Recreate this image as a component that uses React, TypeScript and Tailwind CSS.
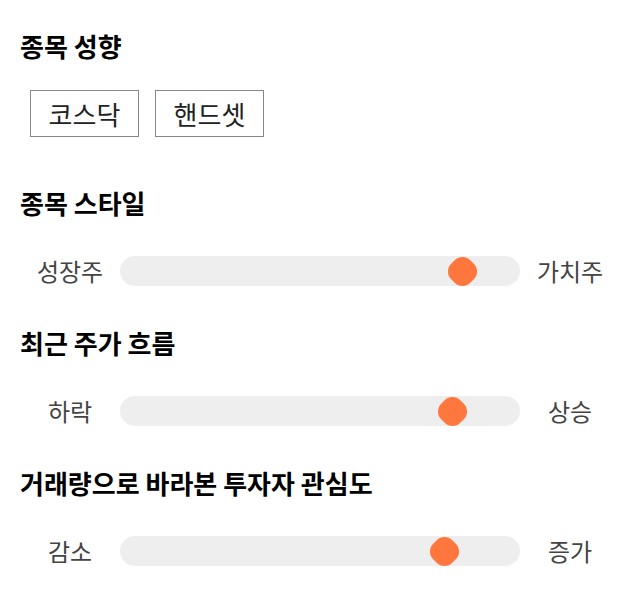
import React from "react";

const font = { fontFamily: '"Noto Sans CJK KR", "Noto Sans", sans-serif' };

function Heading({ children }: { children: React.ReactNode }) {
  return (
    <div className="h-[32px] leading-[32px] text-[26px] font-bold text-black">
      {children}
    </div>
  );
}

function Slider({ left, right, value }: { left: string; right: string; value: number }) {
  return (
    <div className="flex items-center h-[30px]">
      <div className="w-[100px] text-center text-[24px] leading-[30px] text-[#444]">{left}</div>
      <div className="relative w-[400px] h-[30px] rounded-full bg-[#eeeeee]">
        <div
          className="absolute top-[1.5px] w-[27px] h-[27px] -ml-[13.5px] rotate-45 rounded-[11px] bg-[#ff773d]"
          style={{ left: `${value}%` }}
        />
      </div>
      <div className="w-[100px] text-center text-[24px] leading-[30px] text-[#444]">{right}</div>
    </div>
  );
}

export default function App() {
  return (
    <div className="w-[640px] h-[606px] bg-white px-[20px] pt-[30px]" style={font}>
      <Heading>종목 성향</Heading>
      <div className="flex gap-[16px] ml-[10px] mt-[28px]">
        <div className="w-[109px] h-[47px] border border-[#888] flex items-center justify-center text-[26px] text-[#222]">
          코스닥
        </div>
        <div className="w-[109px] h-[47px] border border-[#888] flex items-center justify-center text-[26px] text-[#222]">
          핸드셋
        </div>
      </div>
      <div className="mt-[50px]">
        <Heading>종목 스타일</Heading>
      </div>
      <div className="mt-[37px]">
        <Slider left="성장주" right="가치주" value={85.5} />
      </div>
      <div className="mt-[41px]">
        <Heading>최근 주가 흐름</Heading>
      </div>
      <div className="mt-[37px]">
        <Slider left="하락" right="상승" value={83.2} />
      </div>
      <div className="mt-[41px]">
        <Heading>거래량으로 바라본 투자자 관심도</Heading>
      </div>
      <div className="mt-[37px]">
        <Slider left="감소" right="증가" value={81.2} />
      </div>
    </div>
  );
}
